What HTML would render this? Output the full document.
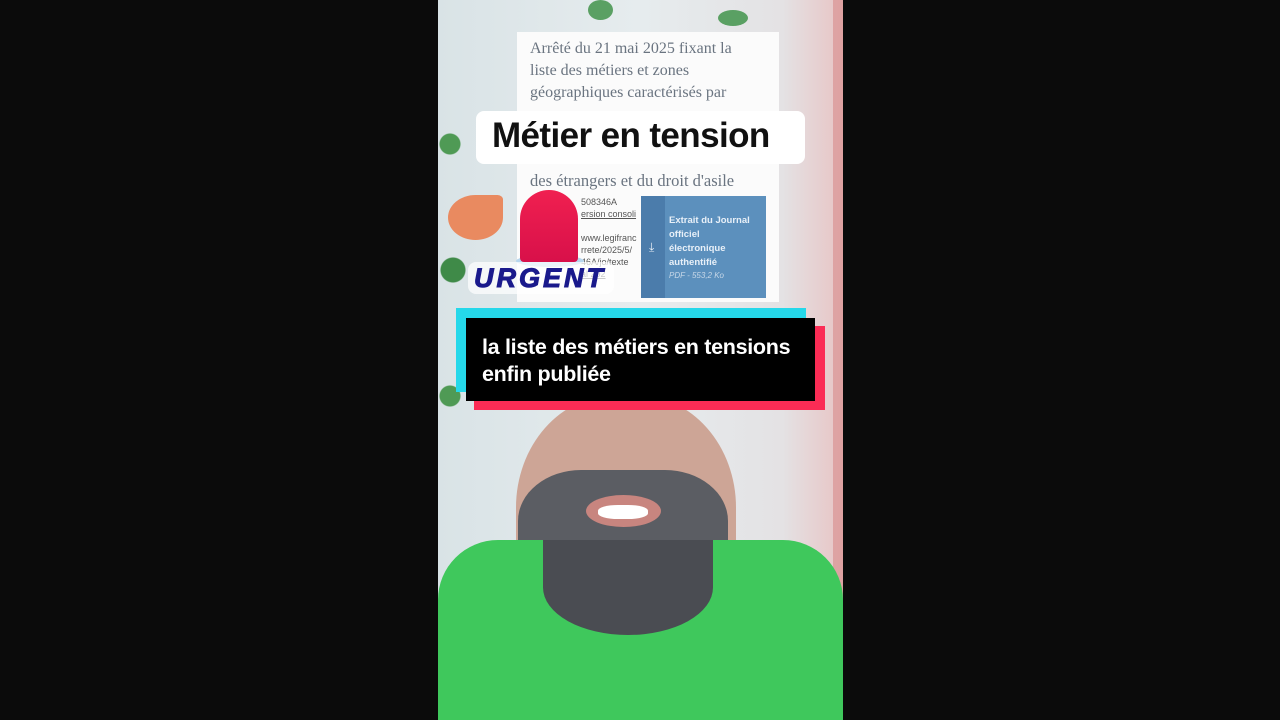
<!DOCTYPE html>
<html><head><meta charset="utf-8"><style>
*{margin:0;padding:0;box-sizing:border-box}
body{width:1280px;height:720px;background:#0b0b0b;position:relative;overflow:hidden;font-family:"Liberation Sans",sans-serif}
.v{position:absolute;left:438px;top:0;width:405px;height:720px;background:linear-gradient(90deg,#d9e3e6 0%,#e6ecee 50%,#e4e2e4 85%,#e8c4c4 100%);overflow:hidden}
.a{position:absolute}
</style></head><body>
<div class="v">
  <div class="a" style="left:0;top:60px;width:30px;height:420px;background:radial-gradient(circle at 40% 20%,#4f9a55 10px,transparent 11px),radial-gradient(circle at 50% 50%,#3f8a48 12px,transparent 13px),radial-gradient(circle at 40% 80%,#4f9a55 10px,transparent 11px)"></div>
  <div class="a" style="left:10px;top:195px;width:55px;height:45px;background:#e98a60;border-radius:50% 10% 50% 50%"></div>
  <div class="a" style="left:150px;top:0;width:25px;height:20px;background:#5aa063;border-radius:50%"></div>
  <div class="a" style="left:280px;top:10px;width:30px;height:16px;background:#5aa063;border-radius:50%"></div>
  <div class="a" style="left:395px;top:0;width:10px;height:720px;background:#d78a8a;opacity:.6"></div>
  <div class="a" style="left:78px;top:395px;width:220px;height:250px;background:#cda596;border-radius:45% 45% 40% 40%"></div>
  <div class="a" style="left:80px;top:470px;width:210px;height:170px;background:#5b5d63;border-radius:30% 30% 50% 50%"></div>
  <div class="a" style="left:148px;top:495px;width:75px;height:32px;background:#c8857f;border-radius:50%"></div>
  <div class="a" style="left:160px;top:505px;width:50px;height:14px;background:#fff;border-radius:40%"></div>
  <div class="a" style="left:0;top:540px;width:405px;height:180px;background:#3fc85c;border-radius:60px 60px 0 0"></div>
  <div class="a" style="left:105px;top:540px;width:170px;height:95px;background:#4a4c52;border-radius:0 0 50% 50%"></div>
  <div class="a" style="left:79px;top:32px;width:262px;height:270px;background:#fbfbfb"></div>
  <div class="a" style="left:92px;top:38px;width:225px;font:16px/22px 'Liberation Serif',serif;color:#6a7480">Arrêté du 21 mai 2025 fixant la liste des métiers et zones géographiques caractérisés par</div>
  <div class="a" style="left:92px;top:170px;font:16.5px/22px 'Liberation Serif',serif;color:#6a7480">des étrangers et du droit d'asile</div>
  <div class="a" style="left:143px;top:196px;font:9px/12px 'Liberation Sans';color:#555">508346A<br><u>ersion consoli</u><br><br>www.legifranc<br>rrete/2025/5/<br>46A/jo/texte<br><u>al 202</u></div>
  <div class="a" style="left:203px;top:196px;width:125px;height:102px;background:#5c90bd"></div>
  <div class="a" style="left:203px;top:196px;width:24px;height:102px;background:#4b7cab"></div>
  <div class="a" style="left:211px;top:240px;color:#e8eef5;font-size:12px">⤓</div>
  <div class="a" style="left:231px;top:214px;font:bold 9.5px/14px 'Liberation Sans';color:#e8f0f8">Extrait du Journal<br>officiel<br>électronique<br>authentifié</div>
  <div class="a" style="left:231px;top:271px;font:italic 8px 'Liberation Sans';color:#c8d8e8">PDF - 553,2 Ko</div>
  <div class="a" style="left:38px;top:111px;width:329px;height:53px;background:#fff;border-radius:8px"></div>
  <div class="a" style="left:54px;top:115px;font:bold 35px/42px 'Liberation Sans';color:#111;letter-spacing:-0.6px">Métier en tension</div>
  <div class="a" style="left:78px;top:255px;width:68px;height:12px;background:#b7d6ee;border-radius:50%"></div>
  <div class="a" style="left:82px;top:190px;width:58px;height:72px;background:linear-gradient(#f02050,#d8104a);border-radius:29px 29px 4px 4px"></div>
  <div class="a" style="left:30px;top:262px;width:146px;height:32px;background:rgba(255,255,255,.7);border-radius:8px"></div>
  <div class="a" style="left:36px;top:263px;font:italic 900 27px 'Liberation Sans';color:#1a1a8c;-webkit-text-stroke:1px #1a1a8c;letter-spacing:3px">URGENT</div>
  <div class="a" style="left:18px;top:308px;width:350px;height:84px;background:#25d8ea"></div>
  <div class="a" style="left:36px;top:326px;width:351px;height:84px;background:#fb2c55"></div>
  <div class="a" style="left:28px;top:318px;width:349px;height:83px;background:#000"></div>
  <div class="a" style="left:44px;top:334px;font:bold 21.5px/27px 'Liberation Sans';color:#fff;letter-spacing:-0.3px">la liste des métiers en tensions<br>enfin publiée</div>
</div>
</body></html>
